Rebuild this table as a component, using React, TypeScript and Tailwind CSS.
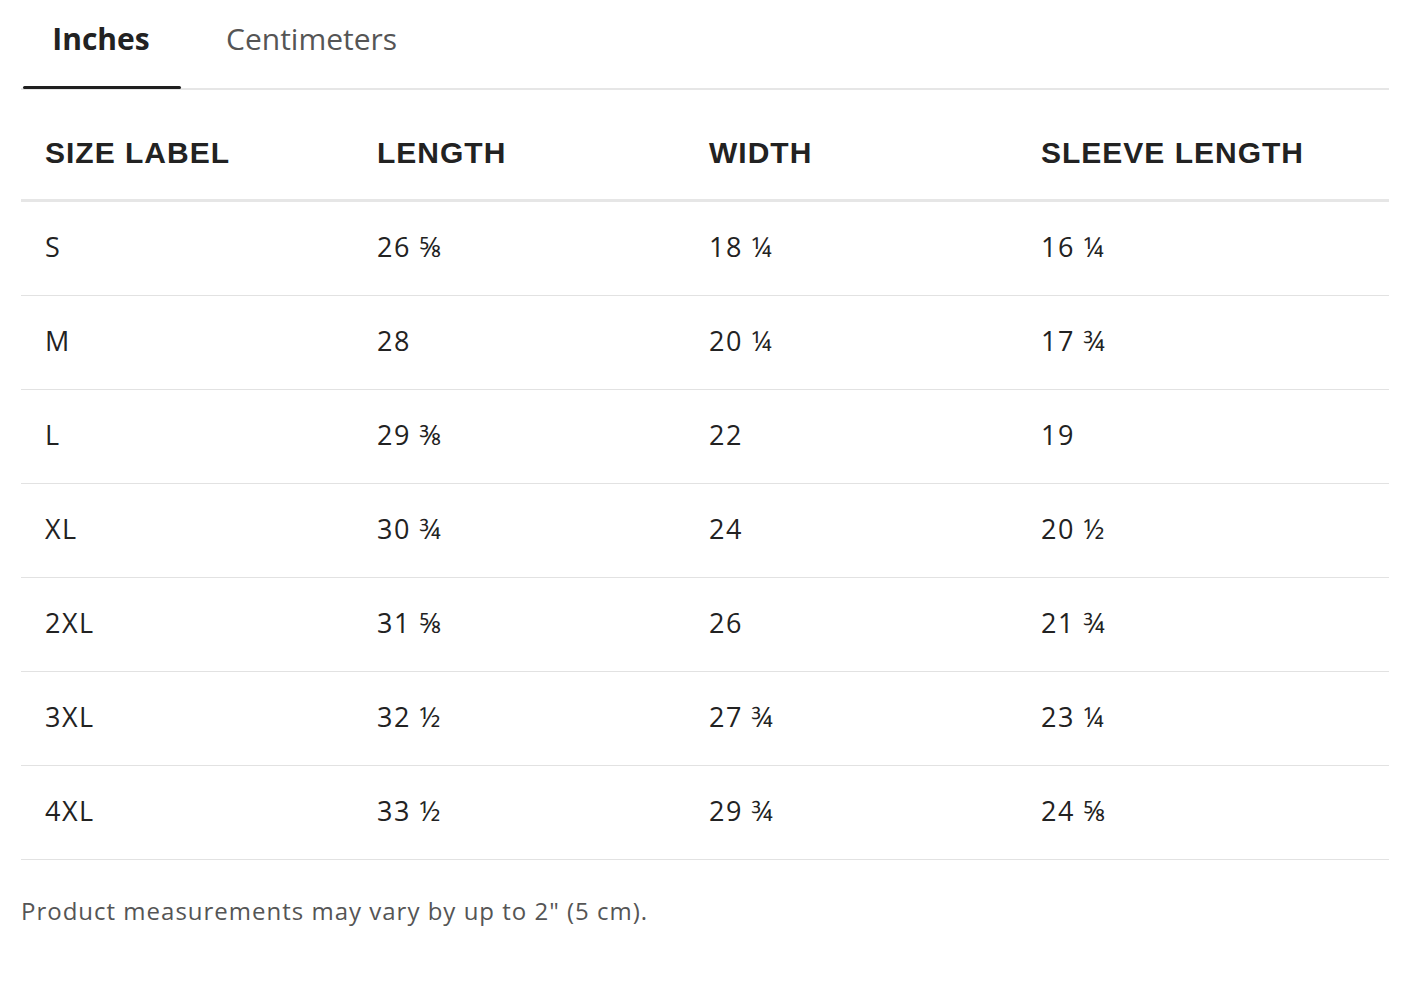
import React from "react";

const rows: string[][] = [
  ["S", "26 ⅝", "18 ¼", "16 ¼"],
  ["M", "28", "20 ¼", "17 ¾"],
  ["L", "29 ⅜", "22", "19"],
  ["XL", "30 ¾", "24", "20 ½"],
  ["2XL", "31 ⅝", "26", "21 ¾"],
  ["3XL", "32 ½", "27 ¾", "23 ¼"],
  ["4XL", "33 ½", "29 ¾", "24 ⅝"],
];

const headers = ["SIZE LABEL", "LENGTH", "WIDTH", "SLEEVE LENGTH"];

export default function App() {
  return (
    <div className="w-[1410px] h-[1005px] bg-white" style={{ fontFamily: "'Open Sans', Lato, sans-serif" }}>
      <div className="ml-[21px] w-[1368px]">
        <div className="flex border-b-2 border-[#e6e6e6] h-[90px]">
          <div className="relative w-[160px] flex justify-center pt-[19px]">
            <span className="text-[30px] leading-[40px] font-bold text-[#222]">Inches</span>
            <div className="absolute left-[2px] right-0 bottom-[-1px] h-[3px] rounded-full bg-[#1f1f1f]" />
          </div>
          <div className="w-[300px] pl-[45px] pt-[19px]">
            <span className="text-[30px] leading-[40px] text-[#555]">Centimeters</span>
          </div>
        </div>
        <div className="grid grid-cols-[332px_332px_332px_1fr] h-[112px] items-center border-b-[3px] border-[#e6e6e6]" style={{ fontFamily: "'Liberation Sans', Arial, sans-serif" }}>
          {headers.map((h) => (
            <div key={h} className="pl-[24px] text-[30px] tracking-[1px] font-bold text-[#222] pt-[16px]">{h}</div>
          ))}
        </div>
        {rows.map((r) => (
          <div key={r[0]} className="grid grid-cols-[332px_332px_332px_1fr] h-[94px] items-center border-b border-[#e2e2e2]">
            {r.map((c, i) => (
              <div key={i} className="pl-[24px] text-[27px] tracking-[1.5px] text-[#222] pb-[2px]">{c}</div>
            ))}
          </div>
        ))}
        <p className="mt-[36px] text-[24px] leading-[30px] tracking-[1px] text-[#555]">Product measurements may vary by up to 2" (5 cm).</p>
      </div>
    </div>
  );
}
